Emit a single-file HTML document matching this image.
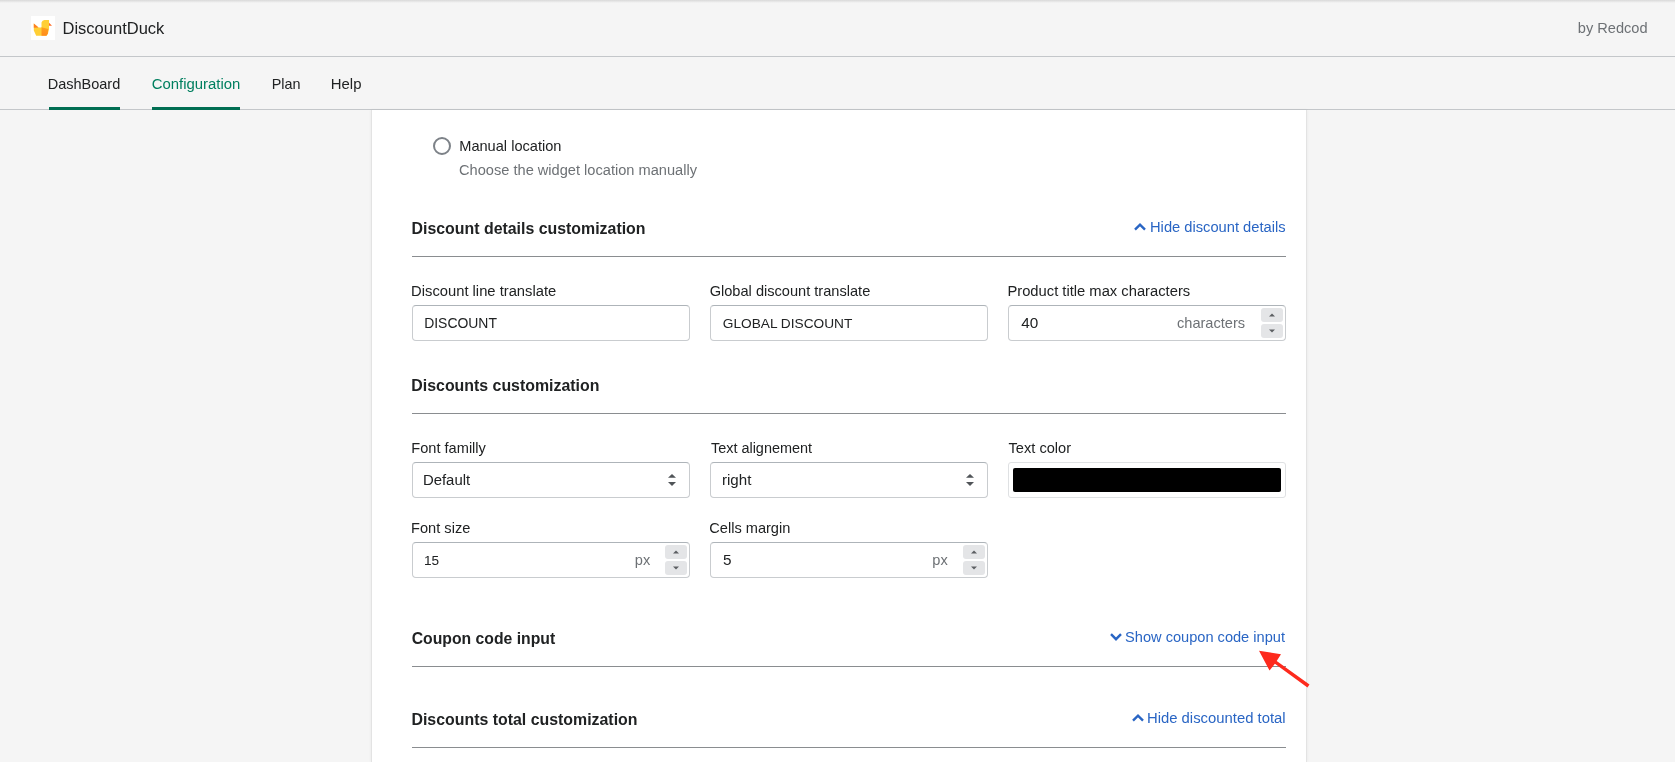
<!DOCTYPE html>
<html><head><meta charset="utf-8"><style>
html,body{margin:0;padding:0;}
body{width:1675px;height:762px;overflow:hidden;position:relative;background:#f5f5f5;font-family:"Liberation Sans",sans-serif;}
.abs{position:absolute;}
.t{position:absolute;white-space:nowrap;line-height:1em;}
.inp{position:absolute;box-sizing:border-box;border:1px solid #c9cccf;border-top-color:#aeb4b9;border-radius:4px;background:#fff;}
.spin{position:absolute;width:22px;height:14px;background:#e4e5e7;border-radius:3px;display:flex;align-items:center;justify-content:center;}
.spin svg{display:block;}
.hr{position:absolute;left:412px;width:874px;height:1px;background:#8a8d90;}
</style></head><body>
<div class="abs" style="left:0;top:0;width:1675px;height:3px;background:linear-gradient(#d9d9d9,#f5f5f5)"></div>
<div class="abs" style="left:0;top:56px;width:1675px;height:1px;background:#c4c7ca"></div>
<div class="abs" style="left:0;top:109px;width:1675px;height:1px;background:#c4c7ca"></div>
<div class="abs" style="left:49px;top:107px;width:71px;height:3px;background:#006e52"></div>
<div class="abs" style="left:152px;top:107px;width:88px;height:3px;background:#006e52"></div>
<div class="abs" style="left:31px;top:16px;width:24px;height:24px;background:#fff"></div>
<svg class="abs" style="left:31px;top:16px" width="24" height="24" viewBox="0 0 24 24">
  <defs><linearGradient id="dg" x1="0" y1="0" x2="0" y2="1"><stop offset="0" stop-color="#ffa21c"/><stop offset="1" stop-color="#ff8a1e"/></linearGradient></defs>
  <path d="M2.8 7.5L7.5 11.6L10.5 11.6L10.5 6.5Q11.2 4 13.5 3.9L18 3.9L18 13L17 17.5L15.6 19.7L5.2 19.7L2.8 14.5Z" fill="#ffcf36"/>
  <path d="M10.5 11.2L17.3 13L16.8 17.5L15.4 19.7L10.5 19.7Z" fill="url(#dg)"/>
  <path d="M2.8 7.5L7.5 11.6L2.8 11.8Z" fill="#ff7e22"/>
  <path d="M18 6.8L21 9.8L18 9.8Z" fill="#ff6b26"/>
</svg>
<div class="abs" style="left:371px;top:110px;width:936px;height:652px;background:#fff;box-sizing:border-box;border-left:1px solid #e3e3e3;border-right:1px solid #e3e3e3;box-shadow:0 0 3px rgba(0,0,0,0.06)"></div>
<div class="abs" style="left:433px;top:137px;width:18px;height:18px;box-sizing:border-box;border:2px solid #7d8288;border-radius:50%"></div>
<div class="hr" style="top:256px"></div>
<div class="hr" style="top:413px"></div>
<div class="hr" style="top:666px"></div>
<div class="hr" style="top:747px"></div>
<div class="inp" style="left:412px;top:305px;width:278px;height:36px"></div><div class="inp" style="left:710px;top:305px;width:278px;height:36px"></div><div class="inp" style="left:1008px;top:305px;width:278px;height:36px"></div>
<div class="spin" style="left:1261px;top:308px"><svg width="6" height="4" viewBox="0 0 6 4"><path d="M0 3.5L3 0.5L6 3.5Z" fill="#5c5f62"/></svg></div><div class="spin" style="left:1261px;top:324px"><svg width="6" height="4" viewBox="0 0 6 4"><path d="M0 0.5L3 3.5L6 0.5Z" fill="#5c5f62"/></svg></div>
<div class="inp" style="left:412px;top:462px;width:278px;height:36px"></div><div class="inp" style="left:710px;top:462px;width:278px;height:36px"></div>
<svg class="abs" style="left:667px;top:473px" width="10" height="14" viewBox="0 0 10 14"><path d="M5 0.9L9 4.8H1Z M1 9H9L5 13Z" fill="#505458"/></svg><svg class="abs" style="left:965px;top:473px" width="10" height="14" viewBox="0 0 10 14"><path d="M5 0.9L9 4.8H1Z M1 9H9L5 13Z" fill="#505458"/></svg>
<div class="abs" style="left:1008px;top:462px;width:278px;height:36px;box-sizing:border-box;border:1px solid #dfe1e3;border-radius:3px;background:#fff"></div>
<div class="abs" style="left:1013px;top:468px;width:268px;height:24px;background:#000;border-radius:2px"></div>
<div class="inp" style="left:412px;top:542px;width:278px;height:36px"></div><div class="inp" style="left:710px;top:542px;width:278px;height:36px"></div>
<div class="spin" style="left:665px;top:545px"><svg width="6" height="4" viewBox="0 0 6 4"><path d="M0 3.5L3 0.5L6 3.5Z" fill="#5c5f62"/></svg></div><div class="spin" style="left:665px;top:561px"><svg width="6" height="4" viewBox="0 0 6 4"><path d="M0 0.5L3 3.5L6 0.5Z" fill="#5c5f62"/></svg></div><div class="spin" style="left:963px;top:545px"><svg width="6" height="4" viewBox="0 0 6 4"><path d="M0 3.5L3 0.5L6 3.5Z" fill="#5c5f62"/></svg></div><div class="spin" style="left:963px;top:561px"><svg width="6" height="4" viewBox="0 0 6 4"><path d="M0 0.5L3 3.5L6 0.5Z" fill="#5c5f62"/></svg></div>
<svg class="abs" style="left:1133px;top:221px" width="14" height="12" viewBox="0 0 14 12"><path d="M2 8.6L7 3.6L12 8.6" fill="none" stroke="#2965c4" stroke-width="2.4"/></svg>
<svg class="abs" style="left:1109px;top:631px" width="14" height="12" viewBox="0 0 14 12"><path d="M2 3.2L7 8.2L12 3.2" fill="none" stroke="#2965c4" stroke-width="2.4"/></svg>
<svg class="abs" style="left:1131px;top:712px" width="14" height="12" viewBox="0 0 14 12"><path d="M2 8.6L7 3.6L12 8.6" fill="none" stroke="#2965c4" stroke-width="2.4"/></svg>
<div class="abs" style="left:0;top:0;width:1675px;height:762px;will-change:transform">
<div class="t" style="left:62.52px;top:20.03px;font-size:16.5px;font-weight:400;color:#202223">DiscountDuck</div>
<div class="t" style="left:1577.78px;top:20.82px;font-size:14.6px;font-weight:400;color:#6d7175">by Redcod</div>
<div class="t" style="left:47.72px;top:76.73px;font-size:14.5px;font-weight:400;color:#202223">DashBoard</div>
<div class="t" style="left:151.74px;top:77.19px;font-size:14.9px;font-weight:400;color:#007f5f">Configuration</div>
<div class="t" style="left:271.72px;top:76.81px;font-size:14.4px;font-weight:400;color:#202223">Plan</div>
<div class="t" style="left:330.80px;top:77.19px;font-size:14.9px;font-weight:400;color:#202223">Help</div>
<div class="t" style="left:459.24px;top:139.00px;font-size:14.6px;font-weight:400;color:#202223">Manual location</div>
<div class="t" style="left:459.04px;top:162.96px;font-size:14.62px;font-weight:400;color:#6d7175">Choose the widget location manually</div>
<div class="t" style="left:411.54px;top:221.16px;font-size:15.9px;font-weight:700;color:#202223">Discount details customization</div>
<div class="t" style="left:1150.02px;top:220.26px;font-size:14.7px;font-weight:400;color:#2965c4">Hide discount details</div>
<div class="t" style="left:411.10px;top:283.69px;font-size:14.75px;font-weight:400;color:#202223">Discount line translate</div>
<div class="t" style="left:424.16px;top:316.99px;font-size:13.95px;font-weight:400;color:#202223">DISCOUNT</div>
<div class="t" style="left:709.66px;top:283.82px;font-size:14.6px;font-weight:400;color:#202223">Global discount translate</div>
<div class="t" style="left:722.80px;top:317.20px;font-size:13.7px;font-weight:400;color:#202223">GLOBAL DISCOUNT</div>
<div class="t" style="left:1007.40px;top:283.69px;font-size:14.75px;font-weight:400;color:#202223">Product title max characters</div>
<div class="t" style="left:1021.18px;top:314.51px;font-size:15.3px;font-weight:400;color:#202223">40</div>
<div class="t" style="left:1176.98px;top:315.64px;font-size:14.6px;font-weight:400;color:#6d7175">characters</div>
<div class="t" style="left:411.34px;top:377.72px;font-size:15.9px;font-weight:700;color:#202223">Discounts customization</div>
<div class="t" style="left:411.30px;top:441.06px;font-size:14.6px;font-weight:400;color:#202223">Font familly</div>
<div class="t" style="left:710.94px;top:440.59px;font-size:14.45px;font-weight:400;color:#202223">Text alignement</div>
<div class="t" style="left:1008.58px;top:441.06px;font-size:14.6px;font-weight:400;color:#202223">Text color</div>
<div class="t" style="left:422.94px;top:472.75px;font-size:14.9px;font-weight:400;color:#202223">Default</div>
<div class="t" style="left:721.98px;top:472.04px;font-size:15.1px;font-weight:400;color:#202223">right</div>
<div class="t" style="left:411.10px;top:521.06px;font-size:14.6px;font-weight:400;color:#202223">Font size</div>
<div class="t" style="left:709.26px;top:521.06px;font-size:14.6px;font-weight:400;color:#202223">Cells margin</div>
<div class="t" style="left:424.04px;top:553.85px;font-size:13.6px;font-weight:400;color:#202223">15</div>
<div class="t" style="left:634.78px;top:553.00px;font-size:14.6px;font-weight:400;color:#6d7175">px</div>
<div class="t" style="left:722.90px;top:552.23px;font-size:15.3px;font-weight:400;color:#202223">5</div>
<div class="t" style="left:932.36px;top:553.00px;font-size:14.6px;font-weight:400;color:#6d7175">px</div>
<div class="t" style="left:411.70px;top:631.09px;font-size:15.75px;font-weight:700;color:#202223">Coupon code input</div>
<div class="t" style="left:1125.10px;top:630.26px;font-size:14.6px;font-weight:400;color:#2965c4">Show coupon code input</div>
<div class="t" style="left:411.46px;top:711.72px;font-size:15.9px;font-weight:700;color:#202223">Discounts total customization</div>
<div class="t" style="left:1146.96px;top:711.49px;font-size:14.85px;font-weight:400;color:#2965c4">Hide discounted total</div>
</div>
<svg class="abs" style="left:0;top:0" width="1675" height="762" viewBox="0 0 1675 762">
  <path d="M1259 650.8L1281 654.2L1276.7 660.9L1309.5 684.4L1307.4 687.6L1274.9 663.8L1269.5 670.5Z" fill="#fd2a1d"/>
</svg>
</body></html>
